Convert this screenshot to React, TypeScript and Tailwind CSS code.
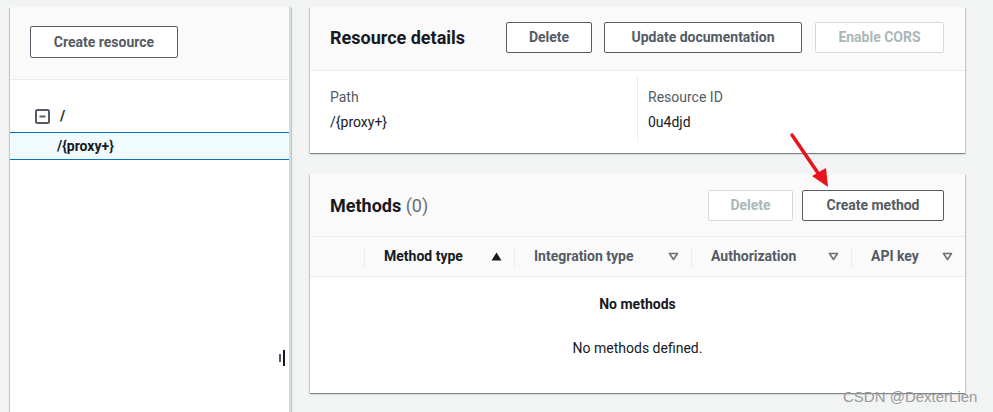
import React from "react";

const cardShadow =
  "shadow-[0_1px_1px_0_rgba(0,28,36,0.3),1px_1px_1px_0_rgba(0,28,36,0.15),-1px_1px_1px_0_rgba(0,28,36,0.15)]";

function Btn({
  children,
  width,
  disabled,
}: {
  children: React.ReactNode;
  width: string;
  disabled?: boolean;
}) {
  return (
    <button
      className={
        disabled
          ? `${width} h-[31px] rounded-[2px] border border-[#d5dbdb] bg-white text-[14px] font-bold text-[#aab7b8]`
          : `${width} h-[31px] rounded-[2px] border border-[#545b64] bg-white text-[14px] font-bold text-[#545b64]`
      }
    >
      {children}
    </button>
  );
}

function MinusSquare() {
  return (
    <svg width="15" height="15" viewBox="0 0 15 15" fill="none">
      <rect x="1" y="1" width="13" height="13" rx="1.5" stroke="#545b64" strokeWidth="2" />
      <line x1="4.5" y1="7.5" x2="10.5" y2="7.5" stroke="#545b64" strokeWidth="2" />
    </svg>
  );
}

function SortDown() {
  return (
    <svg width="11" height="9" viewBox="0 0 11 9" fill="none">
      <path d="M1.5 1.5h8L5.5 7.5z" stroke="#687078" strokeWidth="1.6" strokeLinejoin="round" />
    </svg>
  );
}

function SortUp() {
  return (
    <svg width="11" height="9" viewBox="0 0 11 9">
      <path d="M0.5 8.5h10L5.5 0.5z" fill="#16191f" />
    </svg>
  );
}

function Col({
  width,
  label,
  active,
  first,
}: {
  width: string;
  label?: string;
  active?: boolean;
  first?: boolean;
}) {
  return (
    <div className={`${width} flex items-center h-full`}>
      {!first && <span className="w-px h-[20px] bg-[#eaeded]" />}
      {label && (
        <div className="flex flex-1 items-center justify-between pl-[19px] pr-[12px]">
          <span className={active ? "text-[#16191f]" : "text-[#545b64]"}>{label}</span>
          {active ? <SortUp /> : <SortDown />}
        </div>
      )}
    </div>
  );
}

export default function App() {
  return (
    <div className="relative flex h-[412px] w-[993px] overflow-hidden bg-[#f2f3f3] font-['Roboto',sans-serif] text-[14px] text-[#16191f]">
      {/* resource tree */}
      <aside className={`relative ml-[10px] mt-[7px] flex w-[281px] flex-col border-r-2 border-[#d5dbdb] bg-white ${cardShadow}`}>
        <div className="h-[73px] border-b border-[#eaeded] bg-[#fafafa] pl-[20px] pt-[19px]">
          <Btn width="w-[148px] h-[32px]">Create resource</Btn>
        </div>
        <div className="pt-[21px] font-bold">
          <div className="flex h-[31px] items-center gap-[10px] pl-[25px]">
            <MinusSquare />
            <span>/</span>
          </div>
          <div className="flex h-[28px] items-center border-y border-[#0073bb] bg-[#f1faff] pl-[47px]">
            /{"{proxy+}"}
          </div>
        </div>
        <div className="absolute left-[269px] top-[343px] flex items-center gap-[2px]">
          <span className="h-[8px] w-[2px] bg-[#545b64]" />
          <span className="h-[16px] w-[2px] bg-[#16191f]" />
        </div>
      </aside>

      <main className="ml-[19px] mt-[7px] flex w-[655px] flex-col gap-[21px]">
        {/* resource details */}
        <section className={`bg-white ${cardShadow}`}>
          <div className="flex h-[64px] items-center border-b border-[#eaeded] bg-[#fafafa] pb-[2px] pl-[20px] pr-[21px]">
            <h2 className="text-[18px] font-bold">Resource details</h2>
            <div className="ml-auto flex items-center">
              <Btn width="w-[86px]">Delete</Btn>
              <span className="w-[12px]" />
              <Btn width="w-[198px]">Update documentation</Btn>
              <span className="w-[13px]" />
              <Btn width="w-[129px]" disabled>
                Enable CORS
              </Btn>
            </div>
          </div>
          <div className="flex pb-[11px] pt-[5px] leading-[22px]">
            <div className="w-[327px] pl-[20px] pt-[10px]">
              <div className="text-[#545b64]">Path</div>
              <div className="mt-[3px]">/{"{proxy+}"}</div>
            </div>
            <div className="h-[66px] flex-1 border-l border-[#eaeded] pl-[10px] pt-[10px]">
              <div className="text-[#545b64]">Resource ID</div>
              <div className="mt-[3px]">0u4djd</div>
            </div>
          </div>
        </section>

        {/* methods */}
        <section className={`bg-white ${cardShadow}`}>
          <div className="flex h-[63px] items-center border-b border-[#eaeded] bg-[#fafafa] pl-[20px] pr-[21px]">
            <h2 className="text-[18px] font-bold">
              Methods <span className="font-normal text-[#687078]">(0)</span>
            </h2>
            <div className="ml-auto flex items-center gap-[9px]">
              <Btn width="w-[85px]" disabled>
                Delete
              </Btn>
              <Btn width="w-[142px]">Create method</Btn>
            </div>
          </div>
          <div className="flex h-[40px] items-center border-b border-[#eaeded] bg-[#fafafa] font-bold">
            <Col width="w-[54px]" first />
            <Col width="w-[150px]" label="Method type" active />
            <Col width="w-[177px]" label="Integration type" />
            <Col width="w-[160px]" label="Authorization" />
            <Col width="w-[114px]" label="API key" />
          </div>
          <div className="flex flex-col items-center pb-[34px] pt-[16px] leading-[22px]">
            <div className="font-bold">No methods</div>
            <div className="mt-[22px]">No methods defined.</div>
          </div>
        </section>
      </main>

      {/* annotation arrow */}
      <svg className="absolute left-0 top-0" width="993" height="412" viewBox="0 0 993 412">
        <line x1="792" y1="135" x2="820" y2="176" stroke="#e8141c" strokeWidth="3.5" strokeLinecap="round" />
        <path d="M828 187 L812 176 L826 168 Z" fill="#e8141c" />
      </svg>

      <div className="absolute left-[843px] top-[386px] font-['Liberation_Sans',sans-serif] text-[15px] text-[#9a9a9a]">
        CSDN @DexterLien
      </div>
    </div>
  );
}
